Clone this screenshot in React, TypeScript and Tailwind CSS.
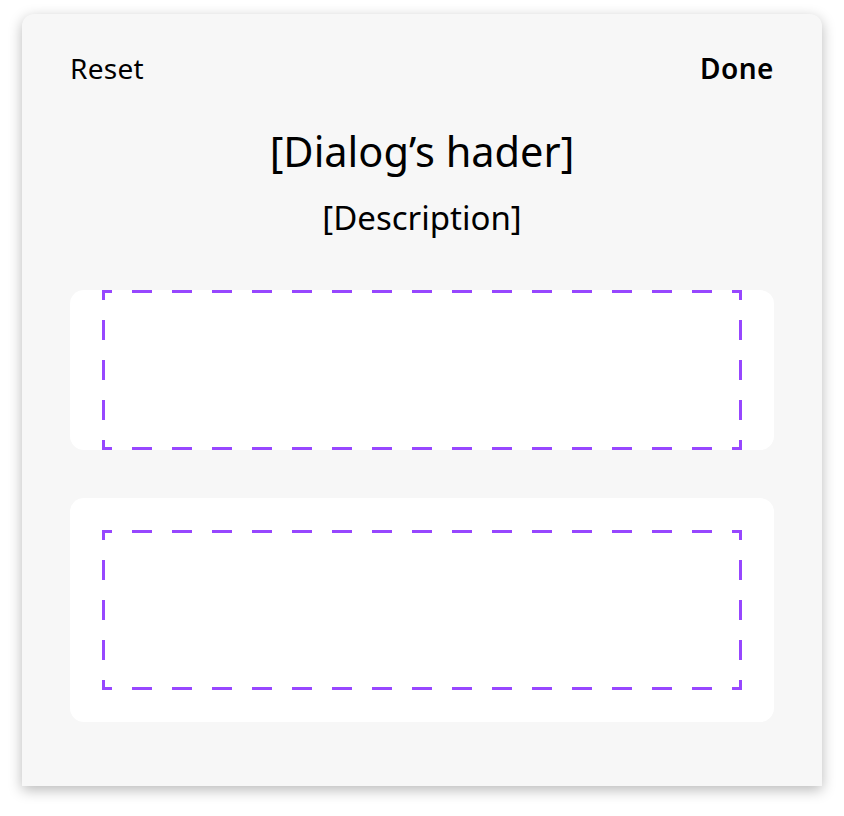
import React from "react";

const PURPLE = "#9747FF";

// dashed component-slot outline, drawn side by side so corners match
const DashedSlot = ({ width = 640, height = 160 }: { width?: number; height?: number }) => {
  const sw = 3;
  const h = sw / 2;
  return (
    <svg width={width} height={height} viewBox={`0 0 ${width} ${height}`} className="block">
      <g stroke={PURPLE} strokeWidth={sw} strokeDasharray="20 20" strokeDashoffset={10} fill="none">
        <line x1={0} y1={h} x2={width} y2={h} />
        <line x1={0} y1={height - h} x2={width} y2={height - h} />
        <line x1={h} y1={0} x2={h} y2={height} />
        <line x1={width - h} y1={0} x2={width - h} y2={height} />
      </g>
    </svg>
  );
};

const App: React.FC = () => {
  return (
    <div
      className="min-h-screen bg-white pl-[22px] pt-[14px]"
      style={{ fontFamily: '"Noto Sans", "Open Sans", sans-serif' }}
    >
      <div className="w-[800px] h-[772px] bg-[#f7f7f7] rounded-t-xl shadow-[0_4px_14px_rgba(0,0,0,0.28)] px-12 pt-[34px]">
        {/* Top actions */}
        <div className="flex items-center justify-between h-10 text-[28px] leading-10 text-black">
          <button className="font-normal tracking-[0.3px]">Reset</button>
          <button className="font-semibold tracking-[0.5px]">Done</button>
        </div>

        {/* Title */}
        <h2 className="mt-[39px] text-center text-[41.5px] leading-[48px] text-black">
          [Dialog’s hader]
        </h2>
        <p className="mt-[23px] text-center text-[33px] leading-10 text-black">[Description]</p>

        {/* Slots */}
        <div className="mt-[52px] flex flex-col gap-12">
          <div className="bg-white rounded-[14px] px-8">
            <DashedSlot />
          </div>
          <div className="bg-white rounded-[14px] p-8">
            <DashedSlot />
          </div>
        </div>
      </div>
    </div>
  );
};

export default App;
